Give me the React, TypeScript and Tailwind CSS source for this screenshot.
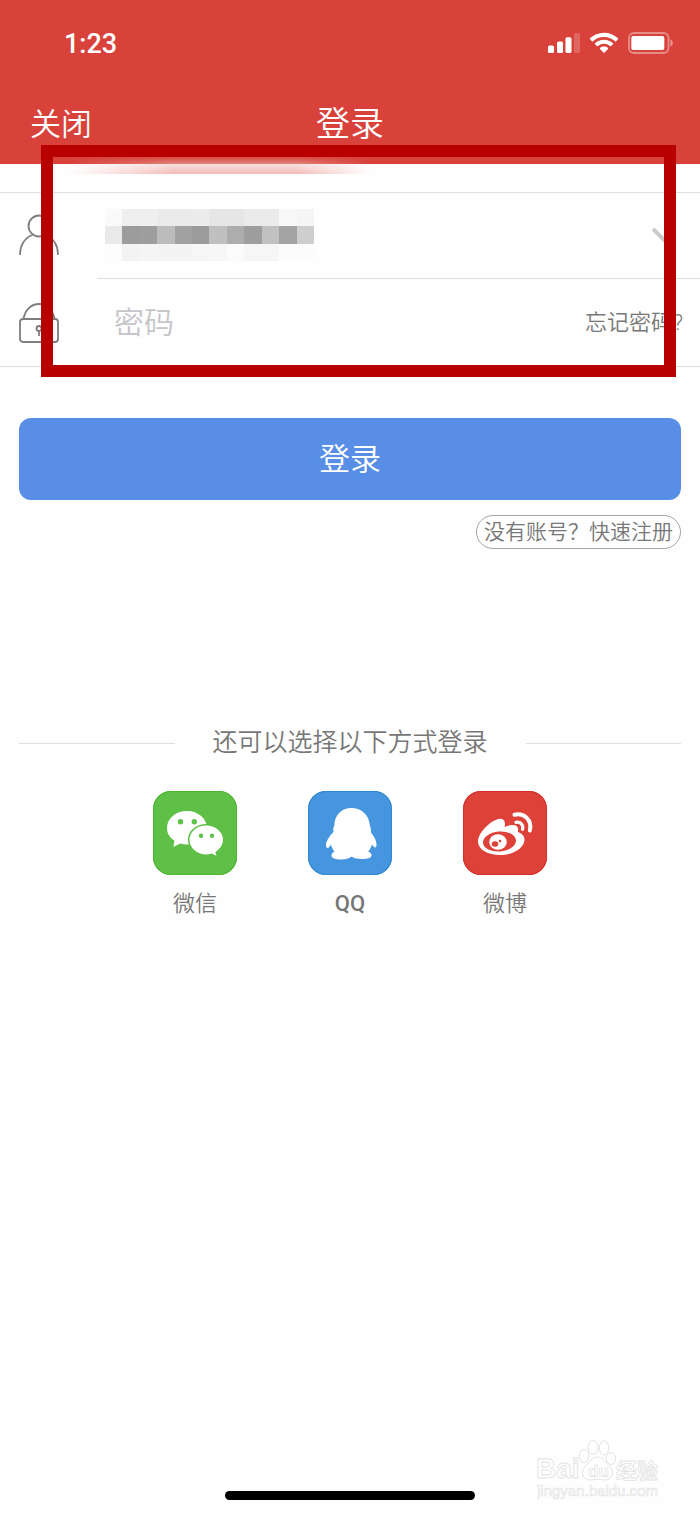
import React, { useState } from 'react';

const mosaic = [
  ['#fafafa', '#eeeeee', '#efefef', '#ebebeb', '#ebebeb', '#ececec', '#e6e6e6', '#e6e6e6', '#ebebeb', '#ebebeb', '#f8f8f8', '#f5f5f5'],
  ['#e9e9e9', '#9c9c9c', '#9e9e9e', '#bcbcbc', '#a1a1a1', '#9b9b9b', '#c0c0c0', '#adadad', '#9e9e9e', '#c1c1c1', '#a3a3a3', '#cecece'],
  ['#fdfdfd', '#f3f3f3', '#f5f5f5', '#f4f4f4', '#f4f4f4', '#f6f6f6', '#f7f7f7', '#fbfbfb', '#f6f6f6', '#f6f6f6', '#fcfcfc', '#fcfcfc'],
];

const StatusIcons: React.FC = () => (
  <div className="flex items-center gap-2.5 text-white">
    <svg width="32" height="22" viewBox="0 0 32 22" fill="currentColor" aria-hidden="true">
      <rect x="0" y="13.5" width="6" height="7.5" rx="1.6" />
      <rect x="9" y="9.5" width="6" height="11.5" rx="1.6" />
      <rect x="17.5" y="5.2" width="6" height="15.8" rx="1.6" />
      <rect x="26" y="1" width="6" height="20" rx="1.6" opacity="0.2" />
    </svg>
    <svg width="28" height="22" viewBox="0 0 28 22" fill="currentColor" aria-hidden="true">
      <path d="M14 .7C8.600.7 3.700 2.800 0 6.300c-.3.300-.3.700 0 1l1.900 1.900c.3.300.7.300 1 0A16 16 0 0 1 14 4.900c4.300 0 8.200 1.600 11.100 4.300.3.300.7.300 1 0L28 7.300c.3-.3.3-.7 0-1A20.300 20.300 0 0 0 14 .7z" />
      <path d="M14 7.700c-3.500 0-6.700 1.300-9 3.500-.3.300-.3.700 0 1l2 1.900c.3.300.7.300 1 0a8.900 8.900 0 0 1 12 0c.3.300.7.300 1 0l2-1.900c.3-.3.300-.7 0-1a13 13 0 0 0-9-3.500z" />
      <path d="M14 14.600c-1.600 0-3 .5-4 1.400-.3.300-.3.700 0 1l3.500 3.600c.3.300.7.300 1 0L18 17c.3-.3.300-.7 0-1-1-.9-2.400-1.400-4-1.400z" />
    </svg>
    <svg width="46" height="22" viewBox="0 0 46 22" fill="none" aria-hidden="true">
      <rect x="1" y="1" width="39.5" height="20" rx="5" stroke="white" strokeOpacity="0.4" strokeWidth="1.8" />
      <rect x="3.300" y="4" width="33" height="14" rx="2" fill="white" />
      <path d="M42.500 7.500c3 .8 3 6.200 0 7z" fill="white" fillOpacity="0.45" />
    </svg>
  </div>
);

const UserIcon: React.FC = () => (
  <svg width="40" height="44" viewBox="0 0 40 44" fill="none" stroke="#7d7d7d" strokeWidth="1.8" aria-hidden="true">
    <circle cx="20" cy="12" r="10.5" />
    <path d="M1.200 41C.5 31.500 6 23.500 13.500 21M38.800 41C39.500 31.500 34 23.500 26.500 21" />
  </svg>
);

const LockIcon: React.FC = () => (
  <svg width="40" height="40" viewBox="0 0 40 40" fill="none" stroke="#7d7d7d" strokeWidth="1.8" aria-hidden="true">
    <rect x="1" y="16" width="38" height="23" rx="3" />
    <path d="M4.500 16C6 7 12 1 20 1s14 6 15.500 15" />
    <circle cx="20" cy="25.5" r="2.5" />
    <path d="M20 28v5" />
  </svg>
);

const WechatIcon: React.FC = () => (
  <svg viewBox="0 0 84 84" className="size-full" aria-hidden="true">
    <path fill="#fff" d="M34 20c-11.200 0-20 7.500-20 17 0 5.500 2.800 9.700 7.500 12.800L20.300 56l7-3.500c2.300.7 4.500 1 6.700 1 11.200 0 20-7.200 20-16.500S45.200 20 34 20z" />
    <circle cx="27.5" cy="30.8" r="2.7" fill="#5ec046" />
    <circle cx="41.3" cy="30.8" r="2.7" fill="#5ec046" />
    <path fill="#fff" stroke="#5ec046" strokeWidth="1.5" d="M53 33.800c-9.500 0-17.300 6.700-17.300 15s7.800 15.500 17.300 15.500c2 0 4-.4 6-1l5.700 3-1.500-5c4.500-3 7.600-7.300 7.600-12.500 0-8.300-8.300-15-17.800-15z" />
    <circle cx="48" cy="44.7" r="2.2" fill="#5ec046" />
    <circle cx="59" cy="44.7" r="2.2" fill="#5ec046" />
  </svg>
);

const QqIcon: React.FC = () => (
  <svg viewBox="0 0 84 84" className="size-full" aria-hidden="true">
    <path fill="#fff" d="M43.500 17c-10 0-17 7.500-17 16.500 0 1.500-1.300 3-1.300 5 0 1 .4 1.500.4 2.200-4 4.300-7.600 9.300-7.600 13.300 0 2 .8 3 1.600 3 1.200 0 2.600-2.200 3.400-3.500.6 2.800 1.800 5 3.500 7-2 .8-3 2.300-3 4 0 2.800 4 4 10 4 4.300 0 7.500-1 9.500-2.700h1c2 1.500 5.500 2.200 9.700 2.200 5.500 0 9.800-1 9.800-3.800 0-1.700-1.200-3-3.300-3.700 1.700-2 3-4.200 3.800-7 1 1.500 2.200 3 3.200 3s1.300-1.500 1.300-3c0-4-2.500-8.500-5.700-12.300.1-.7.200-1.500.2-2.200 0-1.500-.8-3-1.200-5C61 24 53.500 17 43.500 17z" />
  </svg>
);

const WeiboIcon: React.FC = () => (
  <svg viewBox="0 0 84 84" className="size-full" aria-hidden="true">
    <path fill="#fff" d="M41 29.500c-2.600-3.500-9.500-1.300-16 4.500-6.300 5.500-10 11.500-10 16.500 0 8.300 10 13.500 22 13.500 14 0 24.500-7.500 24.500-15.500 0-3.800-3.200-6.500-6.700-7.500 1.500-4.500-1-7.500-6-7-2.500.2-5 1-7.300 2 .8-2.500.5-5-.5-6.500z" />
    <ellipse cx="36.5" cy="50.5" rx="16.5" ry="10" fill="#de4138" transform="rotate(-5 36.5 50.5)" />
    <ellipse cx="35" cy="51" rx="8.8" ry="7.8" fill="#fff" />
    <ellipse cx="32" cy="53" rx="3.3" ry="2.8" fill="#de4138" />
    <circle cx="37" cy="50" r="1.3" fill="#de4138" />
    <path fill="none" stroke="#fff" strokeWidth="4" strokeLinecap="round" d="M51.500 23.700C61 21.500 69.500 29 66.800 39.500" />
    <path fill="none" stroke="#fff" strokeWidth="3.2" strokeLinecap="round" d="M53 31.300c4.500-.7 7.700 2.400 6.500 7" />
  </svg>
);

const BaiduWatermark: React.FC = () => (
  <svg width="124" height="62" viewBox="0 0 124 62" fill="#fff" stroke="#e2e2e2" aria-hidden="true">
    <g fontFamily="'Liberation Sans', 'Noto Sans CJK SC', sans-serif" fontWeight="bold" strokeWidth="0.8">
      <text x="-1" y="39" fontSize="28">Bai</text>
      <text x="79" y="39" fontSize="21">经验</text>
    </g>
    <ellipse cx="47" cy="17" rx="4.7" ry="6.5" />
    <ellipse cx="56" cy="8.5" rx="4.7" ry="7" />
    <ellipse cx="67" cy="9" rx="4.7" ry="7" />
    <ellipse cx="74" cy="19.5" rx="4.7" ry="6" />
    <path d="M60.500 18c-5 0-7 4-10 7s-5 5.500-5 9c0 5 4 7 8 7 2.500 0 4.500-.7 7-.7s4.500.7 7 .7c4.500 0 8-2.500 8-7 0-3.500-2.500-6-5.200-9-3-3.300-5-7-9.800-7z" />
    <text x="51" y="38" fontSize="17" fontWeight="bold" fontFamily="'Liberation Sans', sans-serif" strokeWidth="0.7">du</text>
    <text x="0" y="57" fontSize="15" fontFamily="'Liberation Sans', sans-serif" strokeWidth="0.6">jingyan.baidu.com</text>
  </svg>
);

const providers = [
  { name: '微信', icon: <WechatIcon />, style: 'bg-[#5ec046] inset-ring-[#4db52f]' },
  { name: 'QQ', icon: <QqIcon />, style: 'bg-[#4596df] inset-ring-[#3088ce]', labelStyle: 'font-medium' },
  { name: '微博', icon: <WeiboIcon />, style: 'bg-[#de4138] inset-ring-[#d5302a]' },
];

export default function App() {
  const [username, setUsername] = useState('');
  const [password, setPassword] = useState('');

  return (
    <div className="flex min-h-screen flex-col bg-[#fefefe] font-['Roboto','Noto_Sans_CJK_SC',sans-serif] font-[350] text-[#777]">
      <header className="bg-[#d8423b] text-white">
        <div className="flex h-[86px] items-center justify-between pr-[26px] pl-16">
          <span className="pt-[2px] text-[27px] font-medium">1:23</span>
          <StatusIcons />
        </div>
        <div className="grid h-[78px] grid-cols-3 items-center px-[30px] pb-[2px]">
          <button type="button" className="justify-self-start pt-[2px] text-[31px]">关闭</button>
          <h1 className="text-center text-[34px]">登录</h1>
        </div>
      </header>

      <form onSubmit={(e) => e.preventDefault()}>
        {/* Credentials */}
        <div className="relative pt-7">
          <div className="border-y border-[#dfdfdf]">
            <div className="flex h-[86px] items-center pl-[19px]">
              <label htmlFor="username" aria-label="账号">
                <UserIcon />
              </label>
              <div className="relative ml-[38px] flex h-full flex-1 items-center border-b border-[#dfdfdf] pr-4">
                <input
                  id="username"
                  type="text"
                  value={username}
                  onChange={(e) => setUsername(e.target.value)}
                  className="h-full min-w-0 flex-1 pl-[18px] text-[30px] outline-none"
                />
                <div className="pointer-events-none absolute top-4 left-2 grid h-[52px] w-[209px] grid-cols-12">
                  {mosaic.flat().map((color, i) => (
                    <span key={i} style={{ backgroundColor: color }} />
                  ))}
                </div>
                <button type="button" aria-label="选择账号">
                  <svg width="32" height="20" viewBox="0 0 32 20" fill="none" stroke="#cacaca" strokeWidth="4" aria-hidden="true">
                    <path d="M1 3l10.500 10.500L22 3" />
                  </svg>
                </button>
              </div>
            </div>
            <div className="flex h-[87px] items-center pr-[17px] pl-[19px]">
              <label htmlFor="password" aria-label="密码">
                <LockIcon />
              </label>
              <input
                id="password"
                type="password"
                placeholder="密码"
                value={password}
                onChange={(e) => setPassword(e.target.value)}
                className="ml-[37px] h-full min-w-0 flex-1 pl-[18px] text-[30px] outline-none placeholder:text-[#c5c5ca]"
              />
              <a href="#forgot" className="text-[22px]">忘记密码?</a>
            </div>
          </div>

          {/* Smudge under the header */}
          <div className="pointer-events-none absolute -top-2 left-[70px] h-[18px] w-[300px] bg-[linear-gradient(#d8423b00,#e3827c_42%,#f8dedd_46%,#f3bab6)] mask-[linear-gradient(to_right,transparent,black_35%,black_75%,transparent)]" />
          {/* Highlight frame */}
          <div className="pointer-events-none absolute -top-[19px] right-6 -bottom-[10px] left-[41px] border-12 border-[#b90000]" />
        </div>

        <div className="flex flex-col items-end px-[19px] pt-[51px]">
          <button type="submit" className="h-[82px] w-full rounded-xl bg-[#588ee6] pt-[2px] text-[31px] text-white">
            登录
          </button>
          <a href="#register" className="mt-[15px] flex h-[34px] items-center rounded-full border border-[#a5a5a5] px-[7px] pt-px text-[21px]">
            没有账号？快速注册
          </a>
        </div>
      </form>

      {/* Third-party login */}
      <section className="mt-[174px] px-[19px]">
        <div className="flex items-center gap-[38px]">
          <span className="h-px flex-1 bg-[#dfdfdf]" />
          <h2 className="text-[25px] leading-10">还可以选择以下方式登录</h2>
          <span className="h-px flex-1 bg-[#dfdfdf]" />
        </div>
        <div className="mt-7 flex justify-center gap-[71px]">
          {providers.map((provider) => (
            <button key={provider.name} type="button" className="flex w-[84px] flex-col items-center gap-[13px]">
              <span className={`size-[84px] overflow-hidden rounded-[18px] inset-ring ${provider.style}`}>{provider.icon}</span>
              <span className={`text-[22px] leading-8 ${provider.labelStyle ?? ''}`}>{provider.name}</span>
            </button>
          ))}
        </div>
      </section>

      <footer className="relative mt-auto flex justify-center pb-[15px]">
        <div className="h-[9px] w-[250px] rounded-full bg-black" />
        <div className="absolute right-[39px] bottom-[14px]">
          <BaiduWatermark />
        </div>
      </footer>
    </div>
  );
}
